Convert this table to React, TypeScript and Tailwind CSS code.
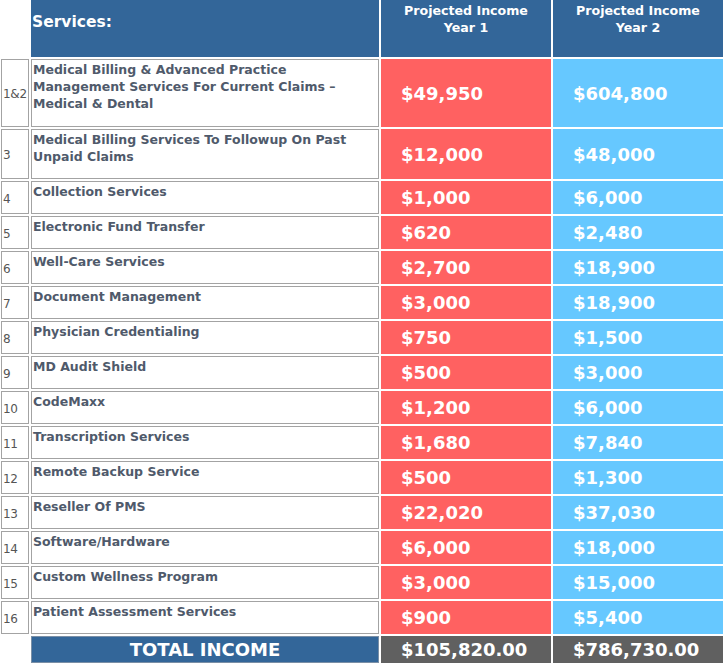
import React from "react";

const rows = [
  { no: "1&2", name: "Medical Billing & Advanced Practice Management Services For Current Claims – Medical & Dental", y1: "$49,950", y2: "$604,800", h: "h-[68px]" },
  { no: "3", name: "Medical Billing Services To Followup On Past Unpaid Claims", y1: "$12,000", y2: "$48,000", h: "h-[50px]" },
  { no: "4", name: "Collection Services", y1: "$1,000", y2: "$6,000", h: "h-[33px]" },
  { no: "5", name: "Electronic Fund Transfer", y1: "$620", y2: "$2,480", h: "h-[33px]" },
  { no: "6", name: "Well-Care Services", y1: "$2,700", y2: "$18,900", h: "h-[33px]" },
  { no: "7", name: "Document Management", y1: "$3,000", y2: "$18,900", h: "h-[33px]" },
  { no: "8", name: "Physician Credentialing", y1: "$750", y2: "$1,500", h: "h-[33px]" },
  { no: "9", name: "MD Audit Shield", y1: "$500", y2: "$3,000", h: "h-[33px]" },
  { no: "10", name: "CodeMaxx", y1: "$1,200", y2: "$6,000", h: "h-[33px]" },
  { no: "11", name: "Transcription Services", y1: "$1,680", y2: "$7,840", h: "h-[33px]" },
  { no: "12", name: "Remote Backup Service", y1: "$500", y2: "$1,300", h: "h-[33px]" },
  { no: "13", name: "Reseller Of PMS", y1: "$22,020", y2: "$37,030", h: "h-[33px]" },
  { no: "14", name: "Software/Hardware", y1: "$6,000", y2: "$18,000", h: "h-[33px]" },
  { no: "15", name: "Custom Wellness Program", y1: "$3,000", y2: "$15,000", h: "h-[33px]" },
  { no: "16", name: "Patient Assessment Services", y1: "$900", y2: "$5,400", h: "h-[33px]" },
];

export default function App() {
  return (
    <div className="w-[725px] h-[666px] bg-white overflow-hidden font-['DejaVu_Sans',sans-serif]">
      <div className="grid grid-cols-[28px_348px_170px_170px] gap-[2px] ml-[1px]">
        {/* Header */}
        <div className="h-[57px]" />
        <div className="h-[57px] bg-[#336699] text-white font-bold text-[15.5px] pl-[1px] pt-[12px] leading-[20px]">
          Services:
        </div>
        <div className="h-[57px] bg-[#336699] text-white font-bold text-[12.6px] leading-[17px] text-center pt-[2px]">
          Projected Income
          <br />
          Year 1
        </div>
        <div className="h-[57px] bg-[#336699] text-white font-bold text-[12.6px] leading-[17px] text-center pt-[2px]">
          Projected Income
          <br />
          Year 2
        </div>

        {/* Rows */}
        {rows.map((r) => (
          <React.Fragment key={r.no}>
            <div className={`${r.h} border border-[#a3a3a3] flex items-center pl-[1px] pt-[2px] text-[12px] text-[#555] tracking-[-0.3px]`}>
              {r.no}
            </div>
            <div className={`${r.h} border border-[#a3a3a3] pl-[1px] pr-[4px] pt-[1px] text-[12.5px] leading-[17px] font-bold text-[#4f5a6b]`}>
              {r.name}
            </div>
            <div className={`${r.h} bg-[#ff6161] flex items-center pl-[20px] text-white font-bold text-[18px]`}>
              {r.y1}
            </div>
            <div className={`${r.h} bg-[#66c8ff] flex items-center pl-[20px] text-white font-bold text-[18px]`}>
              {r.y2}
            </div>
          </React.Fragment>
        ))}

        {/* Total */}
        <div className="h-[27px]" />
        <div className="h-[27px] bg-[#336699] border border-[#7a8fa6] flex items-center justify-center text-white font-bold text-[18px]">
          TOTAL INCOME
        </div>
        <div className="h-[27px] bg-[#606060] flex items-center pl-[20px] text-white font-bold text-[18px]">
          $105,820.00
        </div>
        <div className="h-[27px] bg-[#606060] flex items-center pl-[20px] text-white font-bold text-[18px]">
          $786,730.00
        </div>
      </div>
    </div>
  );
}
